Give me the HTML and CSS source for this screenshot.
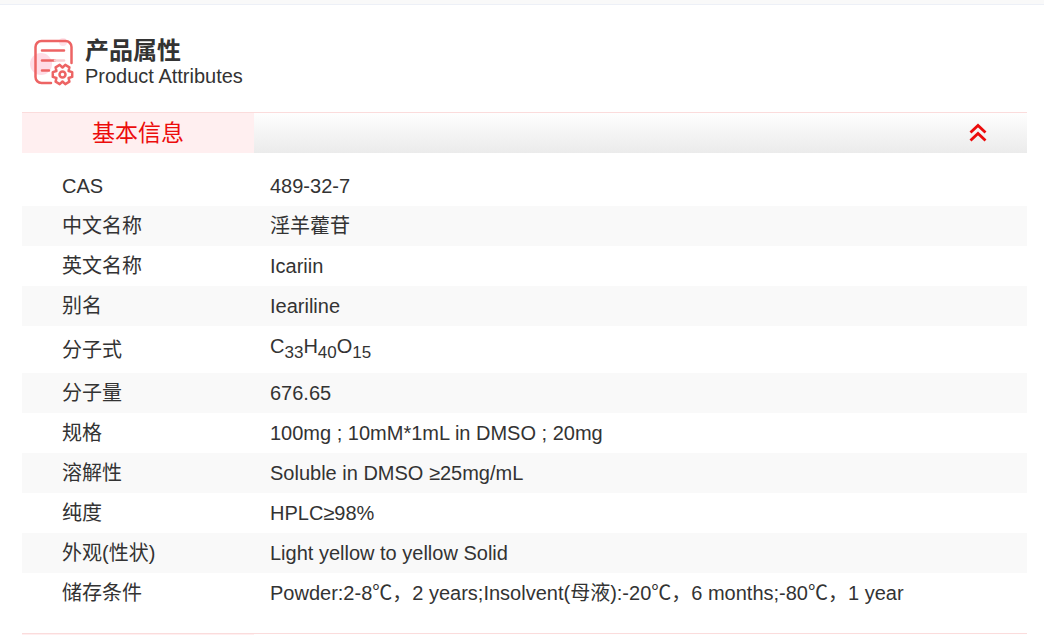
FILE: index.html
```html
<!DOCTYPE html>
<html lang="zh-CN">
<head>
  <meta charset="UTF-8" />
  <meta name="viewport" content="width=device-width, initial-scale=1.0" />
  <title>产品属性</title>
  <link rel="stylesheet" href="styles.css">
</head>
<body>
  <main class="product-attr">
    <header class="attr-title">
      <svg class="attr-icon" width="46" height="49" viewBox="0 0 46 49" fill="none" stroke="#ed6464" stroke-width="2.5" stroke-linecap="round" stroke-linejoin="round" aria-hidden="true">
        <circle cx="11" cy="26" r="11" fill="#ffdce6" stroke="none" />
        <circle cx="33" cy="4" r="4" fill="#ffe3ea" stroke="none" />
        <path d="M21 45H11.500a6 6 0 0 1-6-6V9a6 6 0 0 1 6-6h24a6 6 0 0 1 6 6v16" />
        <path d="M12 12.500h22M12 32.500h7" />
        <path d="M12 22.500h13" />
        <path d="M25 22.500h9" stroke="#f9cfd2" />
        <path d="M42.200 34.100V38.900L38.600 40L39.400 43.700L35.300 46.100L32.500 43.500L29.700 46.100L25.600 43.700L26.400 40L22.800 38.900V34.100L26.400 33L25.600 29.300L29.700 26.900L32.500 29.500L35.300 26.900L39.400 29.300L38.600 33Z" fill="#fff" />
        <circle cx="32.500" cy="36.500" r="3" />
      </svg>
      <div>
        <h1>产品属性</h1>
        <p>Product Attributes</p>
      </div>
    </header>

    <section>
      <div class="attr-bar">
        <h2 class="attr-tab">基本信息</h2>
        <button type="button" class="attr-toggle" aria-label="收起" aria-controls="basic-info" aria-expanded="true">
          <svg width="18" height="20" viewBox="0 0 18 20" fill="none" stroke="#ec0c0c" stroke-width="2.8">
            <path d="M1.500 9.500L9 2.500l7.500 7M1.500 17.500L9 10.500l7.500 7" />
          </svg>
        </button>
      </div>
      <table class="attr-table" id="basic-info">
        <tbody>
          <tr><th scope="row">CAS</th><td>489-32-7</td></tr>
          <tr><th scope="row">中文名称</th><td>淫羊藿苷</td></tr>
          <tr><th scope="row">英文名称</th><td>Icariin</td></tr>
          <tr><th scope="row">别名</th><td>Ieariline</td></tr>
          <tr class="formula"><th scope="row">分子式</th><td>C<sub>33</sub>H<sub>40</sub>O<sub>15</sub></td></tr>
          <tr><th scope="row">分子量</th><td>676.65</td></tr>
          <tr><th scope="row">规格</th><td>100mg ; 10mM*1mL in DMSO ; 20mg</td></tr>
          <tr><th scope="row">溶解性</th><td>Soluble in DMSO ≥25mg/mL</td></tr>
          <tr><th scope="row">纯度</th><td>HPLC≥98%</td></tr>
          <tr><th scope="row">外观(性状)</th><td>Light yellow to yellow Solid</td></tr>
          <tr><th scope="row">储存条件</th><td>Powder:2-8℃，2 years;Insolvent(母液):-20℃，6 months;-80℃，1 year</td></tr>
        </tbody>
      </table>
    </section>

    <div class="next-bar"></div>
  </main>
</body>
</html>
```

FILE: styles.css
```css
* {
  box-sizing: border-box;
}
body {
  margin: 0;
  background: #fff;
  color: #333;
  font-family: "Liberation Sans", Arial, "Noto Sans CJK SC", sans-serif;
  font-size: 20px;
}
h1, h2, p {
  margin: 0;
}
.product-attr {
  border-top: 4px solid #f9f9f9;
  box-shadow: inset 0 1px 0 #edf0f7;
  padding: 34px 17px 0 22px;
}
.attr-title {
  display: flex;
  gap: 9px;
  height: 74px;
  padding-left: 8px;
}
.attr-icon {
  flex: none;
}
.attr-title h1 {
  font-size: 24px;
  line-height: 26px;
}
.attr-title p {
  line-height: 24px;
}
.attr-bar {
  display: flex;
  justify-content: space-between;
  border-top: 1px solid #fbdcdc;
  background: linear-gradient(#fefefe, #ebebeb);
}
.attr-tab {
  width: 232px;
  background: #ffeff0;
  color: #ec0c0c;
  font-size: 23px;
  font-weight: normal;
  line-height: 40px;
  text-align: center;
}
.attr-toggle {
  display: flex;
  align-items: center;
  padding: 0 40px;
  border: none;
  background: none;
  cursor: pointer;
}
.attr-table {
  width: 100%;
  margin: 13px 0 20px;
  border-collapse: collapse;
}
.attr-table tr:nth-child(even) {
  background: #f9f9f9;
}
.attr-table th,
.attr-table td {
  height: 40px;
  padding: 0;
  line-height: 24px;
  text-align: left;
}
.attr-table th {
  width: 248px;
  padding-left: 40px;
  font-weight: normal;
}
.attr-table .formula td {
  height: 47px;
}
.attr-table sub {
  font-size: 17px;
}
/* top edge of the collapsed section below */
.next-bar {
  height: 2px;
  border-top: 1px solid #fbdcdc;
  background: linear-gradient(to right, #ffeff0 232px, #fefefe 232px);
}
```
